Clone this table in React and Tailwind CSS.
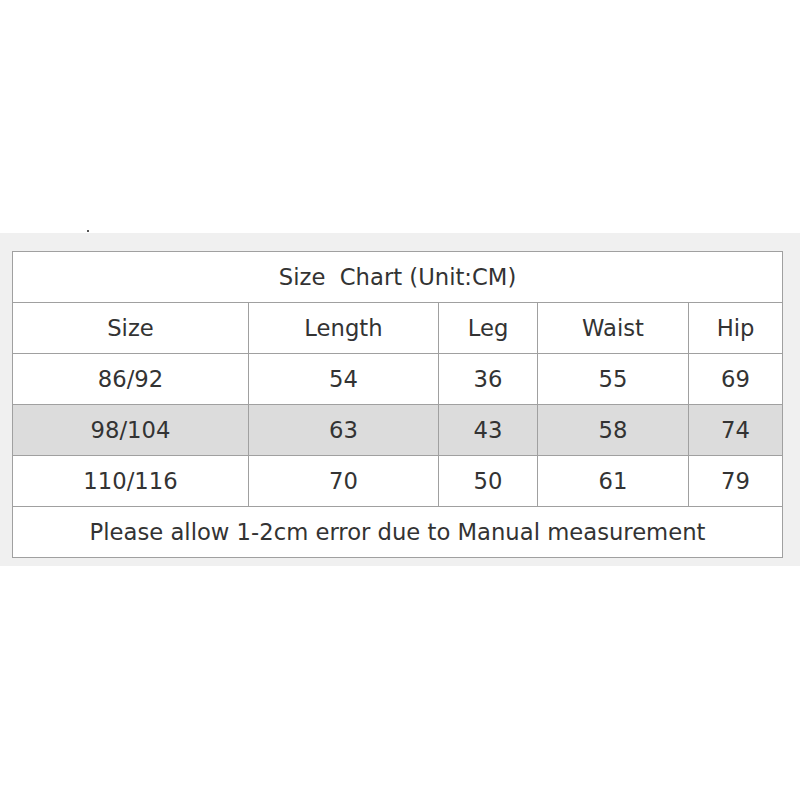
const rows = [
  { size: '86/92', length: 54, leg: 36, waist: 55, hip: 69 },
  { size: '98/104', length: 63, leg: 43, waist: 58, hip: 74, shaded: true },
  { size: '110/116', length: 70, leg: 50, waist: 61, hip: 79 },
]

const cell = 'border border-[#a0a0a0] h-[51px] p-0 text-center align-middle font-normal'

export default function App() {
  return (
    <div className="w-[800px] h-[800px] bg-white" style={{ fontFamily: '"DejaVu Sans", Verdana, sans-serif' }}>
      <div className="h-[233px] relative">
        <span className="absolute left-[87px] top-[230px] w-[2px] h-[2px] bg-[#555]" />
      </div>
      <div className="bg-[#f0f0f0] h-[333px] pt-[18px] pl-[12px]">
        <table className="table-fixed border-collapse bg-white text-[22.7px] text-[#333] w-[770px]">
          <colgroup>
            <col className="w-[236px]" />
            <col className="w-[190px]" />
            <col className="w-[99px]" />
            <col className="w-[151px]" />
            <col className="w-[94px]" />
          </colgroup>
          <tbody>
            <tr>
              <td colSpan={5} className={cell + ' whitespace-pre'}>Size  Chart (Unit:CM)</td>
            </tr>
            <tr>
              <td className={cell}>Size</td>
              <td className={cell}>Length</td>
              <td className={cell}>Leg</td>
              <td className={cell}>Waist</td>
              <td className={cell}>Hip</td>
            </tr>
            {rows.map(r => (
              <tr key={r.size} className={r.shaded ? 'bg-[#dcdcdc]' : ''}>
                <td className={cell}>{r.size}</td>
                <td className={cell}>{r.length}</td>
                <td className={cell}>{r.leg}</td>
                <td className={cell}>{r.waist}</td>
                <td className={cell}>{r.hip}</td>
              </tr>
            ))}
            <tr>
              <td colSpan={5} className={cell}>Please allow 1-2cm error due to Manual measurement</td>
            </tr>
          </tbody>
        </table>
      </div>
    </div>
  )
}
